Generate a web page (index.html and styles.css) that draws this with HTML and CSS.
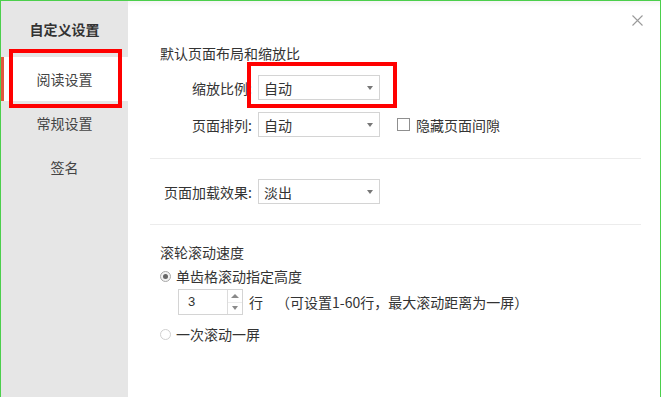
FILE: index.html
```html
<!DOCTYPE html>
<html lang="zh-CN">
<head>
<meta charset="utf-8">
<title>自定义设置</title>
<link rel="stylesheet" href="styles.css">
</head>
<body>
<div class="frame">
  <aside class="sidebar">
    <div class="side-title">自定义设置</div>
    <div class="side-item active">阅读设置</div>
    <div class="side-item">常规设置</div>
    <div class="side-item">签名</div>
  </aside>
  <main class="main">
    <div class="topstrip"></div>
    <section class="section first">
      <div class="heading">默认页面布局和缩放比</div>
      <div class="row">
        <span class="label">缩放比例:</span>
        <div class="select"><span>自动</span><i class="caret"></i></div>
      </div>
      <div class="row row2">
        <span class="label">页面排列:</span>
        <div class="select"><span>自动</span><i class="caret"></i></div>
        <label class="check"><span class="box"></span>隐藏页面间隙</label>
      </div>
    </section>
    <div class="divider"></div>
    <section class="section mid">
      <div class="row">
        <span class="label">页面加载效果:</span>
        <div class="select"><span>淡出</span><i class="caret"></i></div>
      </div>
    </section>
    <div class="divider"></div>
    <section class="section last">
      <div class="heading">滚轮滚动速度</div>
      <div class="radio-row"><span class="radio on"></span>单齿格滚动指定高度</div>
      <div class="spin-row">
        <div class="spin">
          <span class="spin-val">3</span>
          <div class="spin-btns">
            <span class="up"></span>
            <span class="down"></span>
          </div>
        </div>
        <span class="unit">行</span>
        <span class="hint">（可设置1-60行，最大滚动距离为一屏）</span>
      </div>
      <div class="radio-row r2"><span class="radio"></span>一次滚动一屏</div>
    </section>
    <button class="close" aria-label="关闭">
      <svg width="11" height="11" viewBox="0 0 11 11"><path d="M0.5 0.5 L10.5 10.5 M10.5 0.5 L0.5 10.5" stroke="#9a9a9a" stroke-width="1.1" fill="none"/></svg>
    </button>
  </main>
  <div class="mark mark1"></div>
  <div class="mark mark2"></div>
</div>
</body>
</html>
```
FILE: styles.css
```css
* { box-sizing: border-box; }
html, body { margin: 0; padding: 0; background: #fff; }
body {
  font-family: "Noto Sans CJK SC", "Microsoft YaHei", "Noto Sans", sans-serif;
  font-size: 14px;
  color: #333;
}
.frame {
  position: relative;
  width: 661px;
  height: 397px;
  border-top: 1px solid #4ccf4c;
  border-left: 1px solid #4ccf4c;
  border-right: 1px solid #4ccf4c;
  display: flex;
  overflow: hidden;
}
.sidebar {
  width: 127px;
  flex: none;
  background: #e6e6e6;
  display: flex;
  flex-direction: column;
}
.side-title {
  height: 56px;
  line-height: 56px;
  text-align: center;
  font-weight: bold;
  color: #333;
}
.side-item {
  height: 44px;
  line-height: 44px;
  text-align: center;
  color: #444;
}
.side-item.active {
  background: #fff;
  box-shadow: inset 3px 0 0 #e0583f;
}
.main {
  position: relative;
  flex: 1;
  background: #fff;
  padding: 42px 19px 0 22px;
  display: flex;
  flex-direction: column;
}
.topstrip {
  position: absolute;
  left: 0; right: 0; top: 0;
  height: 6px;
  background: linear-gradient(#f4f4f4, #fff);
}
.section { padding: 0 10px; display: flex; flex-direction: column; }
.heading { line-height: 20px; height: 20px; }
.row {
  display: flex;
  align-items: center;
  margin-top: 12px;
}
.section.first { padding-bottom: 21px; }
.section.mid { padding-bottom: 20px; }
.section.mid .row { margin-top: 20px; }
.label {
  width: 92px;
  text-align: right;
  margin-right: 6px;
  line-height: 20px;
}
.select {
  width: 122px;
  height: 25px;
  border: 1px solid #d4d4d4;
  background: #fff;
  display: flex;
  align-items: center;
  justify-content: space-between;
  padding: 0 6px 0 5px;
  line-height: 20px;
}
.caret {
  width: 0; height: 0;
  border-left: 3.5px solid transparent;
  border-right: 3.5px solid transparent;
  border-top: 4px solid #777;
}
.check {
  display: flex;
  align-items: center;
  margin-left: 17px;
  line-height: 20px;
}
.box {
  width: 13px; height: 13px;
  border: 1px solid #8f8f8f;
  margin-right: 6px;
  background: #fff;
}
.divider {
  height: 1px;
  background: #ececec;
}
.section.last .heading { margin-top: 17px; }
.radio-row {
  display: flex;
  align-items: center;
  line-height: 20px;
  margin-top: 4px;
}
.radio-row.r2 { margin-top: 9px; }
.radio {
  width: 11px; height: 11px;
  border-radius: 50%;
  border: 1px solid #d0d0d0;
  background: #fff;
  margin-right: 5px;
  position: relative;
  flex: none;
}
.radio.on { border-color: #a8a8a8; background: #f2f2f2; }
.radio.on::after {
  content: "";
  position: absolute;
  left: 2px; top: 2px;
  width: 5px; height: 5px;
  border-radius: 50%;
  background: #666;
}
.spin-row {
  display: flex;
  align-items: center;
  margin-top: 3px;
  padding-left: 18px;
}
.spin {
  width: 65px;
  height: 26px;
  border: 1px solid #d4d4d4;
  display: flex;
}
.spin-val {
  flex: 1;
  padding-left: 9px;
  line-height: 24px;
  font-family: "Liberation Sans", Arial, sans-serif;
  font-size: 13px;
}
.spin-btns {
  width: 15px;
  border-left: 1px solid #dcdcdc;
  display: flex;
  flex-direction: column;
}
.spin-btns span {
  flex: 1;
  display: flex;
  align-items: center;
  justify-content: center;
}
.spin-btns .up { border-bottom: 1px solid #ececec; }
.spin-btns .up::before {
  content: "";
  border-left: 4px solid transparent;
  border-right: 4px solid transparent;
  border-bottom: 4px solid #8a8a8a;
}
.spin-btns .down::before {
  content: "";
  border-left: 3.5px solid transparent;
  border-right: 3.5px solid transparent;
  border-top: 4px solid #8a8a8a;
}
.unit { margin-left: 6px; line-height: 20px; }
.hint { margin-left: 13px; line-height: 20px; }
.close {
  position: absolute;
  top: 14px;
  right: 17px;
  width: 11px; height: 11px;
  padding: 0; border: 0; background: transparent;
  display: block;
}
.close svg { display: block; }
.mark {
  position: absolute;
  border: 4px solid #f00;
  pointer-events: none;
}
.mark1 { left: 8px; top: 48px; width: 113px; height: 59px; }
.mark2 { left: 246px; top: 61px; width: 150px; height: 46px; }
```
